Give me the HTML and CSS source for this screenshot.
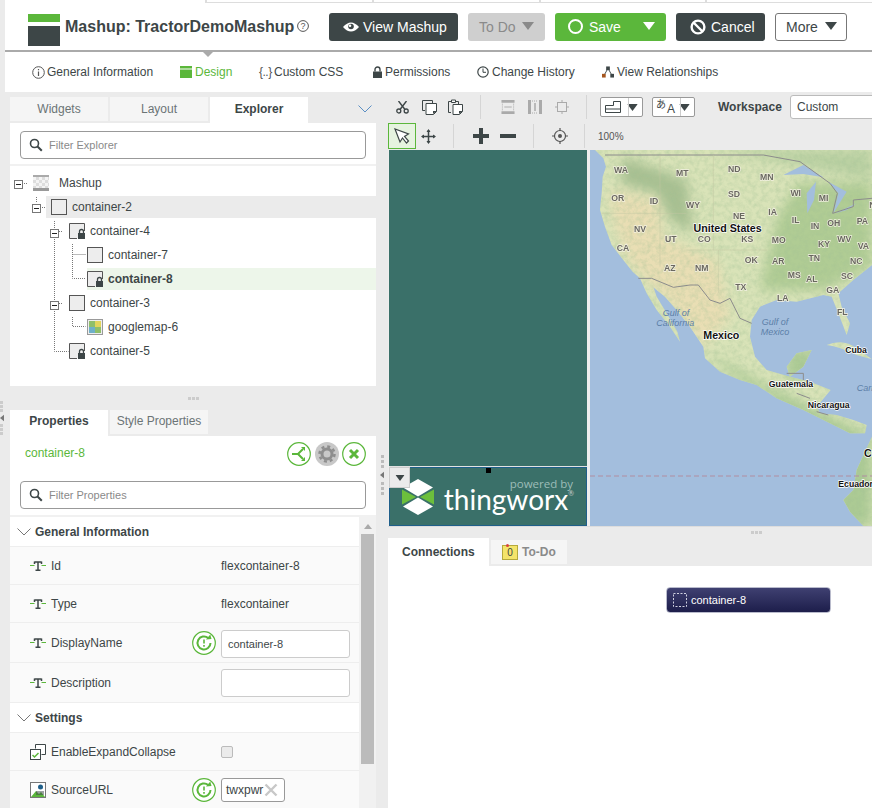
FILE: index.html
```html
<!DOCTYPE html>
<html lang="en">
<head>
<meta charset="utf-8">
<title>Mashup: TractorDemoMashup</title>
<link rel="stylesheet" href="styles.css">
</head>
<body>
<svg class="defs" aria-hidden="true">
  <symbol id="i-box" viewBox="0 0 16 16"><rect x=".5" y=".5" width="15" height="15" fill="#ededed" stroke="#555"/></symbol>
  <symbol id="i-lockbox" viewBox="0 0 16 16"><path d="M8 15.500H.5V.5h15V8" fill="#ededed" stroke="#555"/><path d="M9 10h7v6H9z" fill="#3d4647"/><path d="M10.500 10V8.500a2 2 0 0 1 4 0V10" fill="none" stroke="#3d4647" stroke-width="1.300"/></symbol>
  <symbol id="i-exp" viewBox="0 0 9 9"><rect x=".5" y=".5" width="8" height="8" fill="#fff" stroke="#777"/><path d="M2 4.500h5" stroke="#222"/></symbol>
  <symbol id="i-T" viewBox="0 0 16 10"><path d="M0 4.500h4.500M11.500 4.500H16" stroke="#5bb73b"/><path d="M4.500 1h7M4.500 3V.5M11.500 3V.5M8 1v8M5.500 9.300h5" fill="none" stroke="#3d4647" stroke-width="1.500"/></symbol>
  <symbol id="i-reset" viewBox="0 0 24 24"><circle cx="12" cy="12" r="11.300" fill="#fff" stroke="#5bb73b" stroke-width="1.200"/><path d="M18.500 12a6.500 6.500 0 1 1-2.300-5" fill="none" stroke="#5bb73b" stroke-width="2"/><path d="M14 8.500l5.500-.5-1.200-4.500z" fill="#5bb73b"/><path d="M12 8.500v4M12 14v1.800" stroke="#5bb73b" stroke-width="1.600"/></symbol>
  <symbol id="i-search" viewBox="0 0 14 14"><circle cx="5.500" cy="5.500" r="4" fill="none" stroke="#3d4647" stroke-width="1.600"/><path d="M8.500 8.500l4.300 4.300" stroke="#3d4647" stroke-width="2"/></symbol>
  <symbol id="i-caret" viewBox="0 0 12 8"><path d="M0 0h12L6 8z"/></symbol>
</svg>

<div class="app">
  <div class="topstrip"><i></i><i></i><i></i><i></i></div>

  <header class="head">
    <div class="logo"><span class="logo-top"></span><span class="logo-bot"></span></div>
    <h1 class="title">Mashup: TractorDemoMashup</h1>
    <svg class="help" viewBox="0 0 12 12"><circle cx="6" cy="6" r="5.400" fill="none" stroke="#555"/><text x="6" y="9" class="help-q">?</text></svg>
    <button class="btn btn-dark btn-view">
      <svg class="ic-eye" viewBox="0 0 16 10"><path d="M0 5q8-9 16 0q-8 9-16 0z" fill="#fff"/><circle cx="8" cy="4.500" r="2.800" fill="#3d4647"/><circle cx="7" cy="3.800" r="1.300" fill="#fff"/></svg>View Mashup</button>
    <button class="btn btn-off btn-todo">To Do<svg class="caret-l" viewBox="0 0 12 8"><use href="#i-caret"/></svg></button>
    <button class="btn btn-green btn-save"><span class="ring"></span>Save<svg class="caret-w" viewBox="0 0 12 8"><use href="#i-caret"/></svg></button>
    <button class="btn btn-dark btn-cancel"><svg class="ic-no" viewBox="0 0 16 16"><circle cx="8" cy="8" r="6.400" fill="none" stroke="#fff" stroke-width="2.400"/><path d="M3.500 3.500l9 9" stroke="#fff" stroke-width="2.400"/></svg>Cancel</button>
    <button class="btn btn-line btn-more">More<svg class="caret-d" viewBox="0 0 12 8"><use href="#i-caret"/></svg></button>
    <span class="head-notch"></span>
  </header>

  <nav class="subnav">
    <a class="sub sub-info"><svg class="sub-ic" viewBox="0 0 13 13"><circle cx="6.500" cy="6.500" r="5.800" fill="none" stroke="#555"/><path d="M6.500 3v1.300M6.500 5.500V10" stroke="#555" stroke-width="1.200"/></svg>General Information</a>
    <a class="sub sub-design"><svg class="sub-ic" viewBox="0 0 12 12"><path d="M0 0h12v2.500H0z" fill="#5bb73b"/><path d="M0 3.500h12V12H0z" fill="#5bb73b"/></svg>Design</a>
    <a class="sub sub-css"><span class="braces">{..}</span>Custom CSS</a>
    <a class="sub sub-perm"><svg class="sub-ic" viewBox="0 0 11 12"><path d="M1 5.500h9V12H1z" fill="#3d4647"/><path d="M3 5.500V3.500a2.500 2.500 0 0 1 5 0v2" fill="none" stroke="#3d4647" stroke-width="1.400"/></svg>Permissions</a>
    <a class="sub sub-hist"><svg class="sub-ic" viewBox="0 0 12 12"><circle cx="6" cy="6" r="5.200" fill="none" stroke="#3d4647" stroke-width="1.200"/><path d="M6 2.500V6.300h3" fill="none" stroke="#3d4647"/></svg>Change History</a>
    <a class="sub sub-rel"><svg class="sub-ic" viewBox="0 0 13 12"><path d="M6.500 2L2 10M6.500 2L11 10" stroke="#3d4647"/><rect x="4.500" y="0" width="4" height="4" fill="#3d4647"/><rect x="0" y="8" width="4" height="4" fill="#a4551e"/><rect x="9" y="8" width="4" height="4" fill="#3d4647"/></svg>View Relationships</a>
  </nav>

  <main class="main">
    <section class="left">
      <div class="tabs">
        <span class="tab">Widgets</span>
        <span class="tab">Layout</span>
        <span class="tab tab-on">Explorer</span>
        <svg class="collapse" viewBox="0 0 14 8"><path d="M.5.500L7 7l6.500-6.500" fill="none" stroke="#5b8fc4"/></svg>
      </div>
      <div class="explorer">
        <div class="filter-wrap"><label class="filter"><svg class="f-ic"><use href="#i-search"/></svg><span>Filter Explorer</span></label></div>
        <div class="tree">
          <svg class="tree-lines" viewBox="0 0 100 200"><path d="M24 17.500h4M36.500 31v6M42 41.500h4M54.500 55v130.500h14M59 65.500h4M59 137.500h4M72.500 78v34.500h13M72.500 88.500h13M72.500 151v9.500h13" fill="none" stroke="#777" stroke-dasharray="1 1"/></svg>
          <div class="node n0"><svg class="exp"><use href="#i-exp"/></svg><span class="mash"></span><span class="nl nl-mash">Mashup</span></div>
          <div class="node n1 node-sel"><svg class="exp"><use href="#i-exp"/></svg><svg class="nic"><use href="#i-box"/></svg><span class="nl">container-2</span></div>
          <div class="node n2"><svg class="exp"><use href="#i-exp"/></svg><svg class="nic"><use href="#i-lockbox"/></svg><span class="nl">container-4</span></div>
          <div class="node n3"><svg class="nic"><use href="#i-box"/></svg><span class="nl">container-7</span></div>
          <div class="node n3"><div class="node-cur"><svg class="nic"><use href="#i-lockbox"/></svg><span class="nl nl-b">container-8</span></div></div>
          <div class="node n2"><svg class="exp"><use href="#i-exp"/></svg><svg class="nic"><use href="#i-box"/></svg><span class="nl">container-3</span></div>
          <div class="node n3"><svg class="nic" viewBox="0 0 16 16"><rect x=".5" y=".5" width="15" height="15" fill="#eee" stroke="#999"/><rect x="2" y="2" width="12" height="12" fill="#8fbf6a"/><rect x="8" y="2" width="6" height="6" fill="#e3d55d"/><rect x="2" y="8" width="6" height="6" fill="#6fb0c9"/></svg><span class="nl">googlemap-6</span></div>
          <div class="node n2"><svg class="nic"><use href="#i-lockbox"/></svg><span class="nl">container-5</span></div>
        </div>
      </div>
      <div class="grip"><i></i><i></i><i></i></div>
      <div class="tabs tabs-props">
        <span class="tab tab-on">Properties</span>
        <span class="tab">Style Properties</span>
      </div>
      <div class="props">
        <div class="props-head">
          <span class="sel-name">container-8</span>
          <div class="round-btns">
            <svg class="rb" viewBox="0 0 24 24"><circle cx="12" cy="12" r="11.300" fill="#fff" stroke="#5bb73b" stroke-width="1.200"/><path d="M5 12h6l5-5M11 12l5 5" fill="none" stroke="#5bb73b" stroke-width="2"/><path d="M14 5h4v4zM14 19h4v-4z" fill="#5bb73b"/></svg>
            <svg class="rb" viewBox="0 0 24 24"><circle cx="12" cy="12" r="12" fill="#c8c8c8"/><circle cx="12" cy="12" r="5" fill="none" stroke="#8e8e8e" stroke-width="3"/><circle cx="12" cy="12" r="7.500" fill="none" stroke="#8e8e8e" stroke-width="2.500" stroke-dasharray="3 2.890"/></svg>
            <svg class="rb" viewBox="0 0 24 24"><circle cx="12" cy="12" r="11.300" fill="#fff" stroke="#5bb73b" stroke-width="1.200"/><path d="M8 8l8 8M16 8l-8 8" stroke="#5bb73b" stroke-width="3"/></svg>
          </div>
        </div>
        <div class="filter-wrap filter-wrap-p"><label class="filter"><svg class="f-ic"><use href="#i-search"/></svg><span>Filter Properties</span></label></div>
        <div class="prop-area">
          <div class="prop-list">
            <div class="sec sec-a"><svg class="chev" viewBox="0 0 14 8"><path d="M.5.500L7 7l6.500-6.500" fill="none" stroke="#777"/></svg>General Information</div>
            <div class="prop p38"><svg class="pic"><use href="#i-T"/></svg><span class="pn">Id</span><span class="pa"></span><span class="pv">flexcontainer-8</span></div>
            <div class="prop p38"><svg class="pic"><use href="#i-T"/></svg><span class="pn">Type</span><span class="pa"></span><span class="pv">flexcontainer</span></div>
            <div class="prop p40"><svg class="pic"><use href="#i-T"/></svg><span class="pn">DisplayName</span><svg class="pa-ic"><use href="#i-reset"/></svg><span class="inp inp-d">container-8</span></div>
            <div class="prop p40"><svg class="pic"><use href="#i-T"/></svg><span class="pn">Description</span><span class="pa"></span><span class="inp"></span></div>
            <div class="sec sec-b"><svg class="chev" viewBox="0 0 14 8"><path d="M.5.500L7 7l6.500-6.500" fill="none" stroke="#777"/></svg>Settings</div>
            <div class="prop p38"><svg class="pic pic-l" viewBox="0 0 16 16"><path d="M5.500 4.500V.5h10v10h-4" fill="#fff" stroke="#3d4647"/><rect x=".5" y="5.500" width="10" height="10" fill="#fff" stroke="#3d4647"/><path d="M2.500 11l2 2 4-4" fill="none" stroke="#5bb73b" stroke-width="1.500"/></svg><span class="pn">EnableExpandCollapse</span><span class="pa"></span><span class="chk"></span></div>
            <div class="prop p38"><svg class="pic pic-l" viewBox="0 0 16 16"><rect x=".5" y=".5" width="15" height="15" fill="#fff" stroke="#777"/><path d="M1 15l5-6 3 3 2-2 4 5z" fill="#5bb73b"/><circle cx="10.500" cy="5" r="2.500" fill="#1f5f8a"/><path d="M6 10h8M6 12h8" stroke="#3d4647"/></svg><span class="pn">SourceURL</span><svg class="pa-ic"><use href="#i-reset"/></svg><span class="inp inp-url">twxpwr<svg class="x" viewBox="0 0 14 14"><path d="M1.500 1.500l11 11M12.500 1.500l-11 11" stroke="#c8c8c8" stroke-width="2.400"/></svg></span></div>
          </div>
          <div class="sbar"><svg class="sb-up" viewBox="0 0 8 5"><path d="M0 5l4-5 4 5z" fill="#aaa"/></svg><div class="sb-thumb"></div></div>
        </div>
      </div>
    </section>

    <div class="vgrip"><span></span><span></span><span></span><svg class="vg-arrow" viewBox="0 0 5 8"><path d="M5 0v8L0 4z" fill="#777"/></svg><span></span><span></span><span></span></div>

    <section class="right">
      <div class="tb tb1">
        <svg class="t t-cut" viewBox="0 0 13 13"><circle cx="2.800" cy="10" r="2" fill="none" stroke="#3d4647" stroke-width="1.300"/><circle cx="10.200" cy="10" r="2" fill="none" stroke="#3d4647" stroke-width="1.300"/><path d="M4 8.500L10.500 0M9 8.500L2.500 0" stroke="#3d4647" stroke-width="1.400"/></svg>
        <svg class="t t-copy" viewBox="0 0 15 15"><path d="M3 10.500H.5V.5h10V3" fill="none" stroke="#3d4647"/><path d="M4 3.500h10.500v8l-3 3H4z" fill="#fff" stroke="#3d4647"/><path d="M11 14l4-3h-4z" fill="#3d4647"/></svg>
        <svg class="t t-paste" viewBox="0 0 15 16"><path d="M3 13.500H.5V2.500h10V5" fill="none" stroke="#3d4647"/><path d="M3.500 1h4v2.500h-4z" fill="#fff" stroke="#3d4647"/><path d="M5 5.500h9.500v7l-3 3H5z" fill="#fff" stroke="#3d4647"/><path d="M11 15l4-3h-4z" fill="#3d4647"/></svg>
        <span class="sep sep-a"></span>
        <svg class="t t-al1" viewBox="0 0 14 15"><path d="M0 0h14v3H0zM0 12h14v3H0z" fill="#aaa"/><path d="M1 4v7M13 4v7" stroke="#aaa" stroke-dasharray="1 1"/><path d="M3 7.500h8" stroke="#aaa"/></svg>
        <svg class="t t-al2" viewBox="0 0 14 14"><path d="M0 0h3v14H0zM11 0h3v14h-3z" fill="#aaa"/><path d="M4 1h6M4 13h6" stroke="#aaa" stroke-dasharray="1 1"/><path d="M7 3v8" stroke="#aaa" stroke-width="1.500"/></svg>
        <svg class="t t-al3" viewBox="0 0 14 14"><rect x="2.500" y="2.500" width="9" height="9" fill="none" stroke="#aaa"/><path d="M7 0v2M7 12v2M0 7h2M12 7h2" stroke="#aaa"/></svg>
        <span class="sep sep-b"></span>
        <span class="dd dd-a"><svg class="dd-ic" viewBox="0 0 16 12"><path d="M.5 4.500h8V.5h7v11H.5zM1 8h14" fill="none" stroke="#3d4647"/></svg><svg class="dd-caret" viewBox="0 0 12 8"><use href="#i-caret"/></svg></span>
        <span class="dd dd-b"><span class="lang">あ<b>A</b></span><svg class="dd-caret" viewBox="0 0 12 8"><use href="#i-caret"/></svg></span>
        <span class="ws-label">Workspace</span>
        <span class="ws-select">Custom</span>
      </div>
      <div class="tb tb2">
        <span class="tool-on"><svg class="t-arrow" viewBox="0 0 16 16"><path d="M1 1l5 13 2.500-4 4 5 2-2-4-4.500 4-2.500z" fill="#fff" stroke="#3d4647" stroke-width="1.200"/></svg></span>
        <svg class="t t-move" viewBox="0 0 15 15"><path d="M7.500 1v13M1 7.500h13" stroke="#3d4647" stroke-width="1.500"/><path d="M7.500 0l2 3h-4zM7.500 15l2-3h-4zM0 7.500l3-2v4zM15 7.500l-3-2v4z" fill="#3d4647"/></svg>
        <span class="sep sep-c"></span>
        <span class="plus"></span>
        <span class="minus"></span>
        <span class="sep sep-d"></span>
        <svg class="t t-target" viewBox="0 0 16 16"><circle cx="8" cy="8" r="5.500" fill="none" stroke="#555" stroke-width="1.200"/><circle cx="8" cy="8" r="2" fill="#555"/><path d="M8 0v3M8 13v3M0 8h3M13 8h3" stroke="#555" stroke-width="1.200"/></svg>
        <span class="sep sep-e"></span>
        <span class="zoom">100%</span>
      </div>
      <div class="stage">
        <div class="mashcol">
          <div class="teal-up"></div>
          <div class="teal-foot">
            <span class="foot-menu"><svg viewBox="0 0 12 8"><use href="#i-caret"/></svg></span>
            <span class="foot-handle"></span>
            <svg class="tw-mark" viewBox="0 0 32 36"><path d="M16 0l15 8.500L16 17.500 1 8.500zM16 18.500l15 9-15 8.500-15-8.500z" fill="#fff"/><path d="M0 10.500l14 7.500L0 25.500zM32 10.500L18 18l14 7.500z" fill="#6cbf3c"/></svg>
            <div class="tw-text"><span class="tw-pow">powered by</span><span class="tw-name">thingworx<sup>®</sup></span></div>
          </div>
        </div>
        <div class="mapbox">
          <svg class="map" viewBox="0 0 846 1128" preserveAspectRatio="none">
            <defs>
              <clipPath id="land"><path d="M15 0L40 25 48 50 38 80 35 130 30 180 45 230 65 285 100 330 128 365 150 385 170 430 200 480 240 530 270 575 262 545 230 490 200 440 190 412 225 440 260 480 300 530 340 590 345 625 390 665 450 690 500 705 560 745 640 780 690 805 730 825 780 850 825 850 830 825 790 810 740 795 690 790 680 770 722 720 660 695 600 680 590 650 620 610 665 600 640 650 600 680 530 660 495 620 480 560 485 510 510 470 560 450 620 455 700 435 725 440 745 490 770 555 780 520 755 470 745 430 790 390 846 345 846 0z"/><path d="M846 860L825 905 800 960 790 1020 760 1050 780 1085 820 1128 846 1128z"/><path d="M710 585Q760 565 800 595L846 628 800 615Q750 590 710 585z"/></clipPath>
              <filter id="soft" x="-20%" y="-20%" width="140%" height="140%"><feGaussianBlur stdDeviation="18"/></filter>
              <filter id="noise" x="0" y="0" width="100%" height="100%"><feTurbulence type="fractalNoise" baseFrequency="0.07" numOctaves="4" seed="7"/><feColorMatrix values="0 0 0 0 .36 0 0 0 0 .53 0 0 0 0 .3 1.900 0 0 0 -.72"/></filter>
            </defs>
            <rect class="m-sea" width="846" height="1128"/>
            <g clip-path="url(#land)">
              <rect class="m-land" width="846" height="1128"/>
              <g filter="url(#soft)">
                <path class="m-tan" d="M60 120L200 150 220 260 380 330 420 500 340 590 230 450 120 340 70 220z"/>
                <path class="m-east" d="M510 420L560 210 620 100 846 100 846 350 700 420z"/>
                <path class="m-rock" d="M100 20L290 90 310 250 240 210 200 130 90 100z"/>
                <path class="m-can" d="M360 0H846V90L650 50 540 30z"/>
                <path class="m-mex" d="M350 610L500 690 680 780 846 860V1128H700L540 740 440 690z"/>
                <path class="m-mex" d="M590 600H680V690H590z"/>
              </g>
              <rect class="m-noise" width="846" height="1128" filter="url(#noise)"/>
            </g>
            <path class="m-sea" d="M580 75L640 45 700 82 640 72zM652 190L650 130 678 95 672 150zM715 95L770 125 730 190 745 130zM735 190L800 160 770 180z"/>
            <path class="m-border" d="M45 15H520L630 35 720 100 742 130 728 190 790 170 790 150 846 145M145 385H185L250 412 300 405H325L360 450 390 460 420 445 450 505 485 520M590 670H640V690M620 730L660 745M680 785L715 795"/>
            <path class="m-state" d="M35 190H290M210 15V350M370 15V300M290 300H530M385 300V430"/>
            <path class="m-eq" d="M0 978H846"/>
            <g class="m-st">
              <text x="93" y="70">WA</text><text x="277" y="78">MT</text><text x="433" y="67">ND</text><text x="530" y="90">MN</text><text x="83" y="154">OR</text><text x="192" y="162">ID</text><text x="309" y="175">WY</text><text x="432" y="142">SD</text><text x="617" y="138">WI</text><text x="701" y="154">MI</text><text x="447" y="207">NE</text><text x="548" y="195">IA</text><text x="617" y="220">IL</text><text x="675" y="238">IN</text><text x="731" y="228">OH</text><text x="817" y="222">PA</text><text x="150" y="247">NV</text><text x="242" y="277">UT</text><text x="343" y="277">CO</text><text x="472" y="276">KS</text><text x="566" y="279">MO</text><text x="702" y="291">KY</text><text x="763" y="277">WV</text><text x="820" y="298">VA</text><text x="99" y="304">CA</text><text x="239" y="364">AZ</text><text x="335" y="364">NM</text><text x="484" y="340">OK</text><text x="565" y="343">AR</text><text x="673" y="333">TN</text><text x="799" y="343">NC</text><text x="613" y="385">MS</text><text x="665" y="397">AL</text><text x="771" y="388">SC</text><text x="452" y="420">TX</text><text x="728" y="430">GA</text><text x="578" y="454">LA</text><text x="757" y="495">FL</text><text class="m-start" x="838" y="175">NY</text>
            </g>
            <g class="m-co">
              <text class="m-big" x="413" y="247">United States</text>
              <text class="m-big" x="394" y="568">Mexico</text>
              <text x="798" y="609">Cuba</text>
              <text x="603" y="711">Guatemala</text>
              <text x="716" y="774">Nicaragua</text>
              <text class="m-start" x="745" y="1011">Ecuador</text>
              <text class="m-big m-start" x="822" y="921">Colombia</text>
            </g>
            <g class="m-wa">
              <text x="258" y="498">Gulf of</text><text x="256" y="528">California</text>
              <text x="555" y="525">Gulf of</text><text x="555" y="555">Mexico</text>
              <text class="m-start" x="800" y="724">Caribbean</text>
            </g>
          </svg>
        </div>
      </div>
      <div class="hgrip"><i></i><i></i><i></i></div>
      <div class="tabs tabs-conn">
        <span class="tab-c tab-c-on">Connections</span>
        <span class="tab-c"><span class="note">0</span>To-Do</span>
      </div>
      <div class="conn">
        <div class="cnode"><svg class="cn-ic" viewBox="0 0 14 14"><path d="M.5.500h13v13H.5z" fill="none" stroke="#cfd0e0" stroke-dasharray="2 1.500"/></svg>container-8</div>
      </div>
    </section>
  </main>

  <div class="edge-grip"><i></i><i></i><i></i><svg viewBox="0 0 5 8"><path d="M5 0v8L0 4z" fill="#777"/></svg><i></i><i></i><i></i></div>
</div>
</body>
</html>
```
FILE: styles.css
```css
* { box-sizing: border-box; }
html, body { margin: 0; padding: 0; height: 100%; overflow: hidden; }
body { font-family: "Liberation Sans", Arial, sans-serif; font-size: 12px; color: #3d4647; background: #ebebeb; }
.defs { position: absolute; width: 0; height: 0; }
svg { display: block; flex: none; }

.app { width: 872px; height: 808px; display: flex; flex-direction: column; overflow: hidden; position: relative; }

.topstrip { height: 3px; margin-left: 5px; padding-left: 200px; background: #fff; display: flex; flex: none; }
.topstrip i { width: 200px; height: 3px; border-left: 2px solid #ddd; border-bottom: 1px solid #ddd; background: #fff; }

.head { height: 49px; margin-left: 5px; padding-left: 23px; background: #fff; border-bottom: 2px solid #aaa; display: flex; align-items: center; flex: none; position: relative; }
.logo { width: 32px; height: 32px; display: flex; flex-direction: column; justify-content: space-between; margin-top: 6px; }
.logo-top { height: 8px; background: #5bb73b; }
.logo-bot { height: 20px; background: #3d4647; }
.title { margin: 0 0 0 5px; width: 228px; font-size: 16px; font-weight: bold; white-space: nowrap; color: #3d4647; }
.help { width: 12px; height: 12px; margin: -1px 0 0 4px; }
.help-q { font-size: 9px; text-anchor: middle; fill: #555; }

.btn { height: 28px; border: 0; border-radius: 3px; font: 14px "Liberation Sans", Arial, sans-serif; display: flex; align-items: center; padding: 0; flex: none; margin-left: 10px; }
.btn-dark { background: #3d4647; color: #fff; }
.btn-off { background: #cfcfcf; color: #8a8a8a; }
.btn-green { background: #5bb73b; color: #fff; }
.btn-line { background: #fff; color: #3d4647; border: 1px solid #777; }
.btn-view { width: 129px; margin-left: 20px; padding-left: 14px; }
.btn-todo { width: 77px; padding-left: 11px; }
.btn-save { width: 111px; padding-left: 13px; position: relative; }
.btn-cancel { width: 89px; padding-left: 14px; }
.btn-more { width: 72px; padding-left: 10px; }
.ic-eye { width: 16px; height: 10px; margin-right: 4px; }
.caret-l { width: 12px; height: 8px; fill: #8a8a8a; margin: -1px 0 0 6px; }
.caret-w { width: 12px; height: 8px; fill: #fff; position: absolute; right: 11px; top: 9px; }
.caret-d { width: 12px; height: 8px; fill: #3d4647; margin: -1px 0 0 7px; }
.ring { width: 15px; height: 15px; border: 2px solid #fff; border-radius: 50%; margin-right: 6px; }
.ic-no { width: 16px; height: 16px; margin-right: 5px; }
.head-notch { position: absolute; left: 198px; top: 49px; width: 0; height: 0; border: 5px solid transparent; border-top: 5px solid #aaa; border-bottom: 0; }

.subnav { height: 40px; margin-left: 5px; padding-left: 27px; background: #fff; display: flex; align-items: center; flex: none; color: #3d4647; }
.sub { display: flex; align-items: center; white-space: nowrap; }
.sub-ic { width: 12px; height: 12px; margin-right: 3px; }
.sub-info { width: 148px; }
.sub-info .sub-ic { width: 13px; height: 13px; margin-right: 2px; }
.sub-design { width: 79px; color: #5bb73b; }
.sub-css { width: 113px; }
.sub-perm { width: 105px; }
.sub-perm .sub-ic { width: 11px; margin-right: 2px; }
.sub-hist { width: 125px; }
.braces { width: 15px; color: #555; white-space: nowrap; letter-spacing: -.5px; }

.main { flex: 1; display: flex; min-height: 0; }
.left { width: 366px; margin-left: 10px; flex: none; display: flex; flex-direction: column; padding-top: 5px; }
.tabs { display: flex; gap: 2px; flex: none; position: relative; }
.tab { width: 98px; height: 24px; background: #f5f5f5; color: #6b7475; display: flex; align-items: center; justify-content: center; }
.tab-on { background: #fff; color: #3d4647; font-weight: bold; height: 26px; }
.tabs > .tab-on { padding-bottom: 2px; }
.collapse { position: absolute; left: 348px; top: 8px; width: 14px; height: 8px; }

.explorer { height: 263px; background: #fff; flex: none; }
.filter-wrap { padding: 8px 10px 7px; height: 43px; border-bottom: 2px solid #f1f1f1; }
.filter { height: 28px; border: 1px solid #999; border-radius: 4px; display: flex; align-items: center; padding-left: 8px; color: #8a8a8a; font-size: 11px; background: #fff; }
.f-ic { width: 14px; height: 14px; margin-right: 6px; }

.tree { position: relative; padding-top: 6px; }
.tree-lines { position: absolute; left: -10px; top: 0; width: 100px; height: 200px; overflow: visible; }
.node { height: 22px; margin-bottom: 2px; display: flex; align-items: center; position: relative; }
.n0 { padding-left: 5px; }
.n1 { margin-left: 36px; }
.n2 { padding-left: 41px; }
.n3 { padding-left: 77px; }
.exp { width: 9px; height: 9px; position: absolute; top: 9px; }
.n0 .exp { left: 4px; top: 8px; }
.n1 .exp { left: -14px; top: 8px; }
.n2 .exp { left: 40px; }
.nic { width: 16px; height: 16px; margin-right: 5px; }
.n2 .nic { margin-left: 18px; }
.n1 .nic { margin-left: 5px; }
.n0 .mash { width: 16px; height: 16px; margin-left: 18px; background: repeating-conic-gradient(#ddd 0 25%, #f4f4f4 0 50%) 0 0 / 6px 6px; border-top: 2px solid #aaa; border-bottom: 3px solid #999; }
.nl-mash { margin-left: 10px; }
.node-sel { background: #ebebeb; }
.node-cur { display: flex; align-items: center; flex: 1; height: 22px; background: #edf6ea; }
.nl { color: #3d4647; }
.nl-b { font-weight: bold; }

.grip { height: 24px; display: flex; justify-content: center; align-items: center; gap: 1px; flex: none; }
.grip i, .hgrip i { width: 3px; height: 3px; background: #ccc; }
.tabs-props { height: 26px; }
.tabs-props .tab:not(.tab-on) { height: 24px; padding-bottom: 2px; }
.tabs-props > .tab-on { padding-bottom: 4px; }
.props { flex: 1; background: #fff; min-height: 0; display: flex; flex-direction: column; }
.props-head { height: 37px; padding: 6px 10px 0 15px; display: flex; justify-content: space-between; flex: none; }
.sel-name { color: #5bb73b; margin-top: 4px; }
.round-btns { display: flex; gap: 3px; }
.rb { width: 24px; height: 24px; }
.rb:nth-child(2) { margin-left: 1px; }
.filter-wrap-p { height: 44px; flex: none; padding-top: 8px; }

.prop-area { display: flex; flex: 1; min-height: 0; }
.prop-list { width: 349px; flex: none; }
.sec { height: 30px; display: flex; align-items: center; font-weight: bold; border-bottom: 1px solid #eee; background: #fff; padding-left: 7px; }
.chev { width: 14px; height: 8px; margin-right: 4px; }
.prop { display: flex; align-items: center; padding-left: 20px; background: #fafafa; border-bottom: 1px solid #eee; }
.p38 { height: 38px; }
.p40 { height: 40px; }
.pic { width: 16px; height: 10px; margin-right: 5px; }
.pic-l { height: 16px; }
.pn { width: 141px; }
.pa { width: 29px; }
.pa-ic { width: 24px; height: 24px; margin-right: 5px; }
.pv { color: #3d4647; }
.inp { width: 129px; height: 28px; border: 1px solid #ccc; border-radius: 3px; background: #fff; font-size: 11px; padding-left: 6px; display: flex; align-items: center; }
.inp-d { margin-top: 2px; }
.chk { width: 12px; height: 12px; border: 1px solid #bbb; border-radius: 2px; background: #ebebeb; }
.inp-url { width: 64px; height: 24px; border-color: #999; padding-left: 4px; font-size: 12px; }
.x { width: 14px; height: 14px; margin-left: 1px; }
.sbar { flex: 1; background: #f1f1f1; padding: 0 2px; position: relative; }
.sb-up { width: 8px; height: 5px; margin: 7px auto 5px; }
.sb-thumb { height: 230px; background: #bbb; }

.vgrip { width: 12px; flex: none; display: flex; flex-direction: column; align-items: center; padding: 363px 0 0 0; gap: 2px; }
.vgrip span { width: 3px; height: 3px; background: #bbb; }
.vg-arrow { width: 4px; height: 8px; margin: 1px 0; }

.right { flex: 1; min-width: 0; display: flex; flex-direction: column; }
.tb { display: flex; align-items: center; flex: none; position: relative; }
.tb > * { flex: none; }
.tb1 { height: 30px; padding-left: 8px; }
.tb2 { height: 28px; }
.t { display: block; }
.t-cut { width: 13px; height: 13px; margin-right: 13px; }
.t-copy { width: 15px; height: 15px; margin-right: 11px; }
.t-paste { width: 15px; height: 16px; }
.sep { width: 1px; height: 24px; background: #d5d5d5; }
.sep-a { margin: 0 20px 0 17px; }
.t-al1, .t-al2, .t-al3 { width: 14px; height: 14px; margin-right: 13px; }
.t-al3 { margin-right: 0; }
.sep-b { margin: 0 13px 0 17px; }
.dd { width: 43px; height: 20px; background: #fff; border: 1px solid #999; border-radius: 2px; display: flex; align-items: center; padding-left: 3px; margin-right: 9px; position: relative; }
.dd-ic { width: 16px; height: 12px; margin-left: 1px; }
.dd-caret { position: absolute; right: 4px; top: 6px; width: 11px; height: 7px; fill: #3d4647; }
.dd::after { content: ""; position: absolute; left: 27px; top: 0; bottom: 0; width: 1px; background: #ccc; }
.lang { font: 10px/12px "Noto Sans CJK JP", sans-serif; display: flex; align-items: flex-start; height: 18px; }
.lang b { font: 12px/12px "Liberation Sans", sans-serif; margin: 5px 0 0 1px; }
.ws-label { font-weight: bold; margin-left: 14px; width: 72px; }
.ws-select { width: 120px; height: 24px; background: #fff; border: 1px solid #bbb; border-radius: 3px; padding-left: 6px; display: flex; align-items: center; }

.tool-on { width: 28px; height: 26px; background: #e6f3e0; border: 1px solid #5bb73b; display: flex; align-items: center; justify-content: center; margin-right: 5px; }
.t-arrow { width: 16px; height: 16px; }
.t-move { width: 15px; height: 15px; }
.sep-c { margin: 0 19px 0 17px; }
.plus { width: 16px; height: 16px; margin-right: 11px; background: linear-gradient(#3d4647, #3d4647) center / 16px 4px no-repeat, linear-gradient(#3d4647, #3d4647) center / 4px 16px no-repeat; }
.minus { width: 16px; height: 4px; background: #3d4647; }
.sep-d { margin: 0 18px 0 17px; }
.t-target { width: 16px; height: 16px; }
.sep-e { margin: 0 13px 0 16px; }
.zoom { font-size: 10px; color: #555; }

.stage { height: 377px; display: flex; flex: none; padding-left: 1px; background: #eee; gap: 3px; border-bottom: 1px solid #ddd; }
.mashcol { width: 198px; flex: none; display: flex; flex-direction: column; background: #e2e2e2; }
.teal-up { height: 316px; background: #3a7069; margin-bottom: 1px; flex: none; }
.teal-foot { flex: 1; background: #3a7069; border: 1px solid #1f5f8a; position: relative; display: flex; align-items: center; padding-left: 12px; }
.foot-menu { position: absolute; left: -1px; top: -1px; width: 21px; height: 21px; background: #ebebeb; border: 1px solid #ccc; display: flex; align-items: center; justify-content: center; }
.foot-menu svg { width: 10px; height: 6px; fill: #3d4647; }
.foot-handle { position: absolute; left: 96px; top: 0; width: 5px; height: 5px; background: #000; }
.tw-mark { width: 32px; height: 36px; margin-top: 1px; }
.tw-text { display: flex; flex-direction: column; align-items: flex-end; align-self: flex-start; margin: 12px 0 0 12px; width: 128px; }
.tw-pow { color: #9dbdb8; font: 11.5px/8px "Open Sans", sans-serif; margin: 0 1px 0 0; }
.tw-name { color: #fff; font: 400 28px/14px Lato, sans-serif; white-space: nowrap; margin-top: 4px; }
.tw-name sup { font-size: 7px; vertical-align: 14px; line-height: 0; color: #ccc; }

.mapbox { flex: 1; min-width: 0; overflow: hidden; background: #a3bedd; }
.map { width: 282px; height: 376px; }
.m-sea { fill: #a3bedd; }
.m-land { fill: #d9e3b8; }
.m-tan { fill: #e9deb4; }
.m-east { fill: #b0cc94; }
.m-rock { fill: #a8c092; }
.m-can { fill: #b9d0a2; }
.m-mex { fill: #acca94; }
.m-noise { opacity: .4; }
.m-border { fill: none; stroke: #8c8c8c; stroke-width: 3; }
.m-state { fill: none; stroke: #c3c7a2; stroke-width: 1.500; }
.m-eq { stroke: #b08da0; stroke-width: 3; stroke-dasharray: 15 9; }
.map text { font-family: "Liberation Sans", Arial, sans-serif; text-anchor: middle; paint-order: stroke; }
.map .m-start { text-anchor: start; }
.m-st text { font-size: 26px; font-weight: bold; fill: #64625c; stroke: #f4f2e4; stroke-width: 4; opacity: .95; }
.m-co text { font-size: 26px; font-weight: bold; fill: #111; stroke: #fff; stroke-width: 4; }
.m-co .m-big { font-size: 32px; }
.m-wa text { font-size: 27px; font-style: italic; fill: #5c7ea8; }

.hgrip { height: 11px; display: flex; align-items: center; gap: 1px; flex: none; justify-content: flex-start; padding-left: 363px; }
.tabs-conn { height: 28px; gap: 2px; align-items: flex-start; flex: none; }
.tab-c { width: 76px; height: 24px; margin-top: 2px; background: #f5f5f5; color: #8a8a8a; font-weight: bold; display: flex; align-items: center; padding-left: 11px; }
.tab-c-on { width: 101px; height: 28px; margin-top: 0; background: #fff; color: #3d4647; padding-left: 14px; }
.note { width: 16px; height: 15px; background: #f4e46a; border: 1px solid #b5a93c; font-size: 10px; font-weight: normal; color: #3d4647; text-align: center; line-height: 14px; margin-right: 4px; position: relative; }
.note::before { content: ""; position: absolute; left: 3px; top: -2px; width: 3px; height: 3px; border-radius: 50%; background: #d8423f; }
.conn { flex: 1; background: #fff; padding: 21px 0 0 278px; }
.cnode { width: 165px; height: 26px; border: 1px solid #b9bbcc; border-radius: 4px; background: linear-gradient(#3f4071, #1d1e4b); color: #fff; font-size: 11px; display: flex; align-items: center; padding-left: 6px; }
.cn-ic { width: 14px; height: 14px; margin-right: 4px; }

.edge-grip { position: absolute; left: 0; top: 401px; width: 4px; display: flex; flex-direction: column; gap: 1px; }
.edge-grip i { width: 3px; height: 3px; background: #ccc; }
.edge-grip svg { width: 4px; height: 8px; margin: 1px 0; }
```
